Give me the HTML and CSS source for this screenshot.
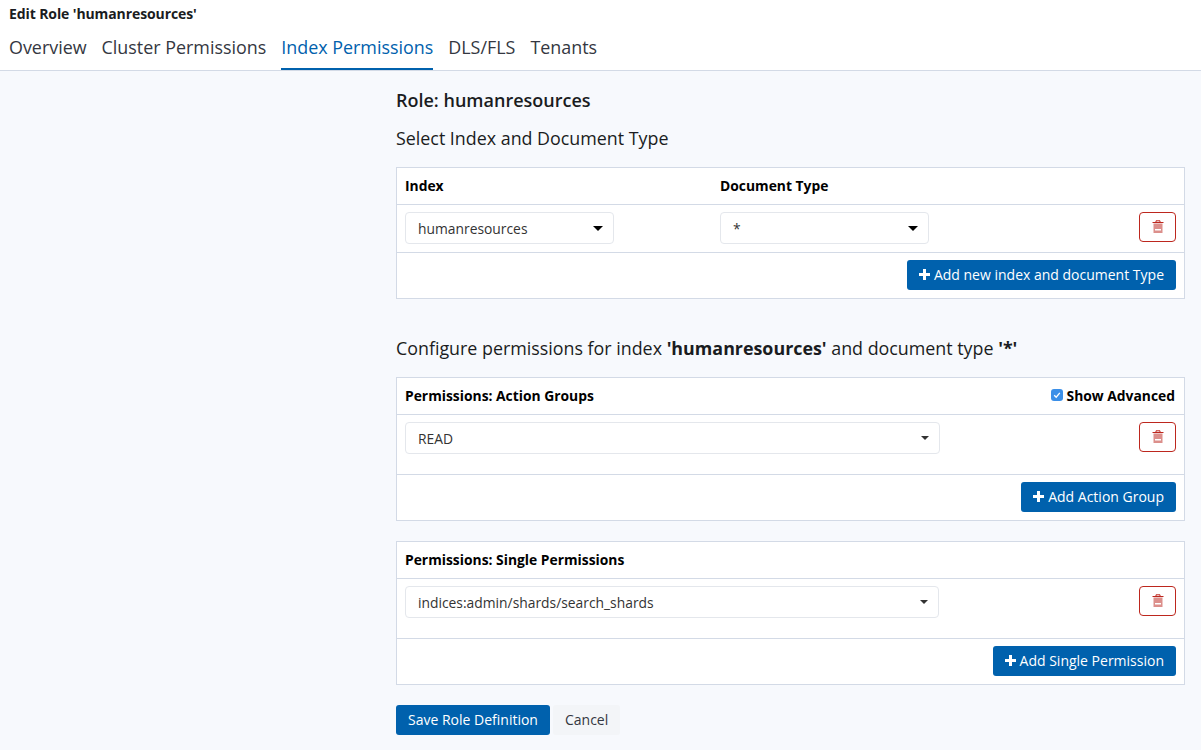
FILE: index.html
```html
<!doctype html>
<html lang="en">
    <head>
        <meta charset="UTF-8" />
        <title>Edit Role</title>
        <link rel="stylesheet" href="styles.css">
    </head>
    <body>
        <div class="page-header">
            <div class="page-title">Edit Role 'humanresources'</div>
            <div class="tabs">
                <a class="tab">Overview</a>
                <a class="tab">Cluster Permissions</a>
                <a class="tab active">Index Permissions</a>
                <a class="tab">DLS/FLS</a>
                <a class="tab">Tenants</a>
            </div>
        </div>

        <div class="content">
            <h3 class="role-name">Role: humanresources</h3>
            <p class="section-title select-title">Select Index and Document Type</p>

            <div class="panel">
                <div class="panel-head">
                    <div class="col-index">Index</div>
                    <div>Document Type</div>
                </div>
                <div class="panel-row short">
                    <div class="col-index">
                        <div class="select small"><span>humanresources</span><i class="caret big"></i></div>
                    </div>
                    <div class="select small"><span>*</span><i class="caret big"></i></div>
                    <button class="btn-delete"><svg class="trash" viewBox="0 0 12 14"><path class="trash-lid" d="M.5 2.5h11M4 2.5V.8h4v1.7"/><path class="trash-body" d="M1.5 3.5h9V13h-9zM3 9v1.5h6V9z"/></svg></button>
                </div>
                <div class="panel-foot">
                    <button class="btn-primary"><svg class="plus" viewBox="0 0 11 11"><path d="M4 0h3v4h4v3H7v4H4V7H0V4h4z"/></svg>Add new index and document Type</button>
                </div>
            </div>

            <p class="section-title config-title">Configure permissions for index <b>'humanresources'</b> and document type <b>'*'</b></p>

            <div class="panel">
                <div class="panel-head spread">
                    <div>Permissions: Action Groups</div>
                    <label class="show-advanced"><span class="checkbox"><svg viewBox="0 0 12 12"><path d="M3.2 6.2 5.2 8.2 8.8 3.8" fill="none" stroke="#fff" stroke-width="1.3"/></svg></span>Show Advanced</label>
                </div>
                <div class="panel-row tall">
                    <div class="select wide-a"><span>READ</span><i class="caret"></i></div>
                    <button class="btn-delete"><svg class="trash" viewBox="0 0 12 14"><path class="trash-lid" d="M.5 2.5h11M4 2.5V.8h4v1.7"/><path class="trash-body" d="M1.5 3.5h9V13h-9zM3 9v1.5h6V9z"/></svg></button>
                </div>
                <div class="panel-foot">
                    <button class="btn-primary"><svg class="plus" viewBox="0 0 11 11"><path d="M4 0h3v4h4v3H7v4H4V7H0V4h4z"/></svg>Add Action Group</button>
                </div>
            </div>

            <div class="panel second">
                <div class="panel-head">
                    <div>Permissions: Single Permissions</div>
                </div>
                <div class="panel-row tall">
                    <div class="select wide-b"><span>indices:admin/shards/search_shards</span><i class="caret"></i></div>
                    <button class="btn-delete"><svg class="trash" viewBox="0 0 12 14"><path class="trash-lid" d="M.5 2.5h11M4 2.5V.8h4v1.7"/><path class="trash-body" d="M1.5 3.5h9V13h-9zM3 9v1.5h6V9z"/></svg></button>
                </div>
                <div class="panel-foot">
                    <button class="btn-primary"><svg class="plus" viewBox="0 0 11 11"><path d="M4 0h3v4h4v3H7v4H4V7H0V4h4z"/></svg>Add Single Permission</button>
                </div>
            </div>

            <div class="actions">
                <button class="btn-primary save">Save Role Definition</button>
                <button class="btn-cancel">Cancel</button>
            </div>
        </div>
    </body>
</html>
```

FILE: styles.css
```css
* {
    box-sizing: border-box;
}
html, body {
    height: 100%;
}
body {
    margin: 0;
    font-family: "Open Sans", sans-serif;
    color: #1a1c21;
    background-color: #f7f9fd;
    overflow: hidden;
}
.page-header {
    background: #fff;
    height: 71px;
    padding: 6px 0 0 9px;
    border-bottom: 1px solid #d3dae6;
}
.page-title {
    font-size: 14px;
    letter-spacing: -0.1px;
    font-weight: 700;
    line-height: 16px;
}
.tabs {
    display: flex;
    gap: 15px;
    margin-top: 5px;
}
.tab {
    font-size: 17.9px;
    line-height: 40px;
    height: 43px;
    color: #343741;
}
.tab.active {
    color: #0061ad;
    border-bottom: 2px solid #0061ad;
}
.content {
    width: 789px;
    margin-left: 396px;
}
.role-name {
    margin: 17px 0 0;
    font-size: 18px;
    line-height: 24px;
    font-weight: 600;
}
.section-title {
    margin: 0;
    font-size: 17.85px;
    line-height: 24px;
}
.select-title {
    margin-top: 14px;
}
.config-title {
    margin-top: 37px;
    margin-bottom: 17px;
}
.select-title + .panel {
    margin-top: 17px;
}
.panel {
    background: #fff;
    border: 1px solid #d3dae6;
    font-size: 13.85px;
}
.panel.second {
    margin-top: 20px;
}
.panel-head {
    display: flex;
    align-items: center;
    height: 37px;
    padding: 0 9px 2px 8px;
    border-bottom: 1px solid #d3dae6;
    font-weight: 700;
    color: #000;
}
.panel-head.spread {
    justify-content: space-between;
}
.col-index {
    width: 315px;
}
.panel-row {
    display: flex;
    align-items: flex-start;
    padding: 7px 8px 0;
    border-bottom: 1px solid #d3dae6;
}
.panel-row.short {
    height: 48px;
}
.panel-row.tall {
    height: 60px;
}
.panel-foot {
    display: flex;
    justify-content: flex-end;
    height: 45px;
    padding: 7px 8px 0;
}
.select {
    display: flex;
    align-items: center;
    justify-content: space-between;
    height: 32px;
    padding: 0 10px 0 12px;
    background: #fff;
    border: 1px solid #e4e7ec;
    border-radius: 4px;
    color: #333;
}
.select.small {
    width: 209px;
}
.select.wide-a {
    width: 535px;
}
.select.wide-b {
    width: 534px;
}
.caret {
    width: 0;
    height: 0;
    border-left: 4px solid transparent;
    border-right: 4px solid transparent;
    border-top: 4px solid #333;
}
.caret.big {
    border-left-width: 5px;
    border-right-width: 5px;
    border-top-width: 5px;
    border-top-color: #000;
}
.btn-delete {
    display: flex;
    align-items: center;
    justify-content: center;
    width: 37px;
    height: 30px;
    margin-left: auto;
    padding: 0;
    background: #fff;
    border: 1px solid #bd271e;
    border-radius: 4px;
}
.trash {
    width: 12px;
    height: 14px;
}
.trash-lid {
    fill: none;
    stroke: #bd271e;
    stroke-width: 1;
}
.trash-body {
    fill: #dc8f8b;
    fill-rule: evenodd;
}
.btn-primary {
    display: flex;
    align-items: center;
    height: 30px;
    padding: 0 12px 2px;
    background: #0061ad;
    color: #fff;
    border: none;
    border-radius: 3px;
    font-family: "Open Sans", sans-serif;
    font-size: 14px;
    font-weight: 500;
}
.plus {
    width: 11px;
    height: 11px;
    margin-right: 4px;
    fill: #fff;
}
.show-advanced {
    display: flex;
    align-items: center;
    gap: 4px;
}
.checkbox {
    display: block;
    width: 12px;
    height: 12px;
    background: #3b8fe8;
    border-radius: 3px;
}
.checkbox svg {
    display: block;
}
.actions {
    display: flex;
    gap: 3px;
    margin-top: 20px;
}
.btn-cancel {
    height: 30px;
    padding: 0 12px 2px;
    background: #f3f5f8;
    color: #343741;
    border: none;
    border-radius: 3px;
    font-family: "Open Sans", sans-serif;
    font-size: 14px;
}
```
